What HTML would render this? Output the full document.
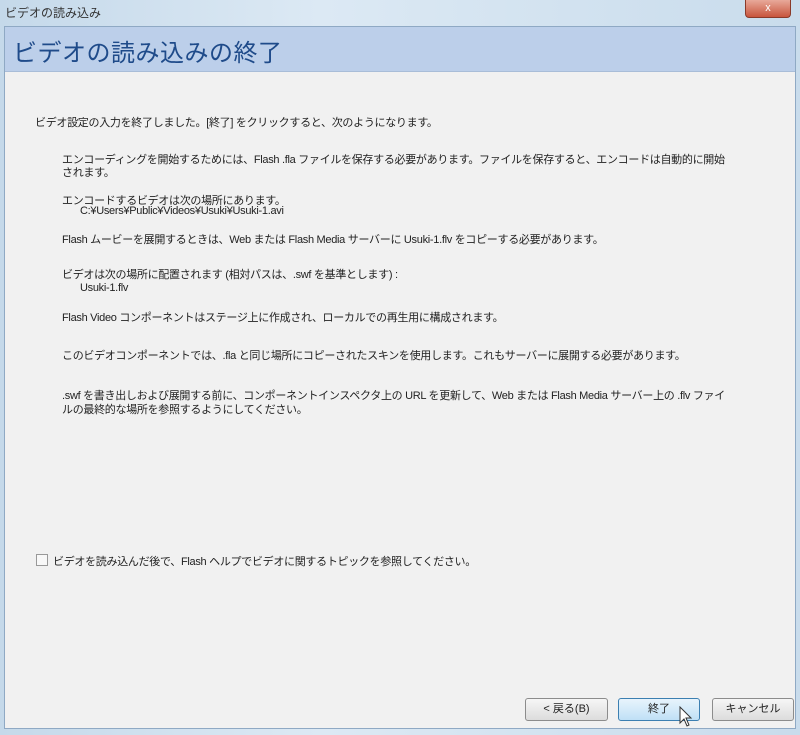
<!DOCTYPE html>
<html><head><meta charset="utf-8"><style>
*{margin:0;padding:0;box-sizing:border-box}
body{width:800px;height:735px;overflow:hidden;background:linear-gradient(90deg,#c5d9ea,#dce9f4 40%,#c9dcec);font-family:"Liberation Sans","Noto Sans CJK JP",sans-serif;position:relative;color:#222}
.t{position:absolute;font-size:11px;white-space:nowrap;letter-spacing:-0.3px}
#title{position:absolute;left:5px;top:4px;font-size:12px;color:#333}
#close{position:absolute;left:745px;top:0;width:46px;height:18px;background:linear-gradient(#e8a99a,#c8553d);border-radius:0 0 4px 4px;color:#fff;font-size:11px;text-align:center;line-height:16px;border:1px solid #8a3a2a;border-top:none}
#win{position:absolute;left:4px;top:26px;width:792px;height:703px;background:#f1f1f1;border:1px solid #8fa9c4}
#hdr{position:absolute;left:0;top:0;width:790px;height:45px;background:#bccfea;border-bottom:1px solid #a9bdd8}
#hdr span{position:absolute;left:8px;top:6px;font-size:24px;color:#1f4b8a;letter-spacing:0.5px}
.btn{position:absolute;top:698px;height:23px;border:1px solid #8c8c8c;border-radius:3px;background:linear-gradient(#f6f6f6,#dcdcdc);font-size:11px;text-align:center;line-height:21px}
.cb{position:absolute;left:36px;top:554px;width:12px;height:12px;border:1px solid #999;background:#f8f8f8}
</style></head><body>
<div id="title">ビデオの読み込み</div>
<div id="close">x</div>
<div id="win"><div id="hdr"><span>ビデオの読み込みの終了</span></div></div>
<div class="t" style="left:35px;top:114px">ビデオ設定の入力を終了しました。[終了] をクリックすると、次のようになります。</div>
<div class="t" style="left:62px;top:151px">エンコーディングを開始するためには、Flash .fla ファイルを保存する必要があります。ファイルを保存すると、エンコードは自動的に開始</div>
<div class="t" style="left:62px;top:164px">されます。</div>
<div class="t" style="left:62px;top:192px">エンコードするビデオは次の場所にあります。</div>
<div class="t" style="left:80px;top:205px">C:¥Users¥Public¥Videos¥Usuki¥Usuki-1.avi</div>
<div class="t" style="left:62px;top:231px">Flash ムービーを展開するときは、Web または Flash Media サーバーに Usuki-1.flv をコピーする必要があります。</div>
<div class="t" style="left:62px;top:266px">ビデオは次の場所に配置されます (相対パスは、.swf を基準とします) :</div>
<div class="t" style="left:80px;top:282px">Usuki-1.flv</div>
<div class="t" style="left:62px;top:309px">Flash Video コンポーネントはステージ上に作成され、ローカルでの再生用に構成されます。</div>
<div class="t" style="left:62px;top:347px">このビデオコンポーネントでは、.fla と同じ場所にコピーされたスキンを使用します。これもサーバーに展開する必要があります。</div>
<div class="t" style="left:62px;top:387px">.swf を書き出しおよび展開する前に、コンポーネントインスペクタ上の URL を更新して、Web または Flash Media サーバー上の .flv ファイ</div>
<div class="t" style="left:62px;top:401px">ルの最終的な場所を参照するようにしてください。</div>
<div class="cb"></div>
<div class="t" style="left:53px;top:553px">ビデオを読み込んだ後で、Flash ヘルプでビデオに関するトピックを参照してください。</div>
<div class="btn" style="left:525px;width:83px">&lt; 戻る(B)</div>
<div class="btn" style="left:618px;width:82px;border-color:#3c7fb1;background:linear-gradient(#e8f4fc,#bfe0f6)">終了</div>
<div class="btn" style="left:712px;width:82px">キャンセル</div>
<svg style="position:absolute;left:679px;top:706px" width="14" height="22" viewBox="0 0 14 22"><path d="M1 1V17L5 13L8 20L10 19L7 12H12Z" fill="#fff" stroke="#333" stroke-width="1"/></svg>
</body></html>
